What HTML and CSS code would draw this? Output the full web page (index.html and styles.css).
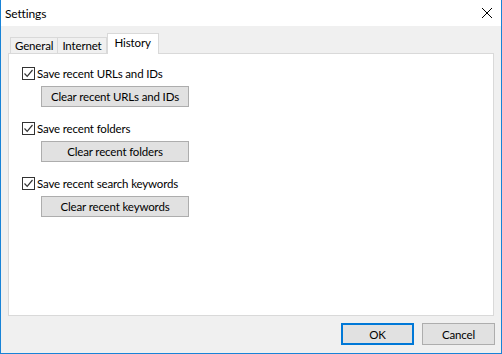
FILE: index.html
```html
<!DOCTYPE html>
<html lang="en">
<head>
  <meta charset="UTF-8">
  <title>Settings</title>
  <link rel="stylesheet" href="styles.css">
</head>
<body>
  <div class="window">
    <div class="titlebar">
      <span class="title">Settings</span>
      <svg class="close" width="10" height="10" viewBox="0 0 10 10">
        <path d="M0 0L10 10M10 0L0 10" stroke="#000" stroke-width="1"/>
      </svg>
    </div>
    <div class="content">
      <div class="tabs">
        <div class="tab">General</div>
        <div class="tab">Internet</div>
        <div class="tab active">History</div>
      </div>
      <div class="panel">
        <div class="group">
          <label class="check">
            <span class="box"><svg width="11" height="11" viewBox="0 0 11 11"><path d="M1.5 5.5L4.2 8.3L9.5 2" fill="none" stroke="#333" stroke-width="1.2"/></svg></span>
            Save recent URLs and IDs
          </label>
          <button class="btn">Clear recent URLs and IDs</button>
        </div>
        <div class="group">
          <label class="check">
            <span class="box"><svg width="11" height="11" viewBox="0 0 11 11"><path d="M1.5 5.5L4.2 8.3L9.5 2" fill="none" stroke="#333" stroke-width="1.2"/></svg></span>
            Save recent folders
          </label>
          <button class="btn">Clear recent folders</button>
        </div>
        <div class="group">
          <label class="check">
            <span class="box"><svg width="11" height="11" viewBox="0 0 11 11"><path d="M1.5 5.5L4.2 8.3L9.5 2" fill="none" stroke="#333" stroke-width="1.2"/></svg></span>
            Save recent search keywords
          </label>
          <button class="btn">Clear recent keywords</button>
        </div>
      </div>
      <div class="footer">
        <button class="btn dlg default">OK</button>
        <button class="btn dlg">Cancel</button>
      </div>
    </div>
  </div>
</body>
</html>
```

FILE: styles.css
```css
body{
  margin: 0;
  font-family: Lato, "Liberation Sans", sans-serif;
  font-size: 11.5px;
  letter-spacing: -0.15px;
  color: #000;
}
.window{
  width: 502px;
  height: 354px;
  box-sizing: border-box;
  border: 1px solid #1883d7;
  border-top: none;
  background-color: #f0f0f0;
  display: flex;
  flex-direction: column;
}
/* 제목줄 */
.titlebar{
  height: 26px;
  background-color: #fff;
  display: flex;
  align-items: center;
  justify-content: space-between;
  padding: 0 9px 0 4px;
}
.title{
  font-size: 12px;
}
.content{
  flex: 1;
  display: flex;
  flex-direction: column;
  padding: 7px 7px 0 7px;
}
/* 탭 */
.tabs{
  height: 20px;
  display: flex;
  align-items: flex-end;
  padding-left: 2px;
}
.tab{
  height: 16px;
  box-sizing: border-box;
  border: 1px solid #d9d9d9;
  border-bottom: none;
  padding: 0 4px;
  line-height: 15px;
  background-color: #f0f0f0;
}
.tab + .tab{
  margin-left: -1px;
}
.tab.active{
  height: 21px;
  margin: 0 0 -1px 0;
  padding: 0 7px;
  line-height: 18px;
  background-color: #fff;
  position: relative;
  z-index: 1;
}
.panel{
  height: 263px;
  box-sizing: border-box;
  border: 1px solid #d9d9d9;
  background-color: #fff;
  padding: 13px 0 0 13px;
}
.group{
  display: flex;
  flex-direction: column;
  align-items: flex-start;
  margin-bottom: 15px;
}
.check{
  display: flex;
  align-items: center;
  height: 13px;
  gap: 2px;
  margin-bottom: 6px;
}
.box{
  width: 13px;
  height: 13px;
  box-sizing: border-box;
  border: 1px solid #333;
  background-color: #fff;
  display: flex;
  align-items: center;
  justify-content: center;
}
.box svg{
  display: block;
}
.btn{
  font-family: inherit;
  font-size: 11.5px;
  letter-spacing: -0.15px;
  color: #000;
  background-color: #e1e1e1;
  border: 1px solid #adadad;
  margin: 0;
  padding: 0;
}
.group .btn{
  width: 148px;
  height: 21px;
  margin-left: 19px;
}
/* 하단 버튼 */
.footer{
  display: flex;
  justify-content: flex-end;
  gap: 8px;
  padding: 7px 0 0 0;
  margin-right: -1px;
}
.dlg{
  width: 73px;
  height: 22px;
}
.default{
  border: 2px solid #0078d7;
}
```
